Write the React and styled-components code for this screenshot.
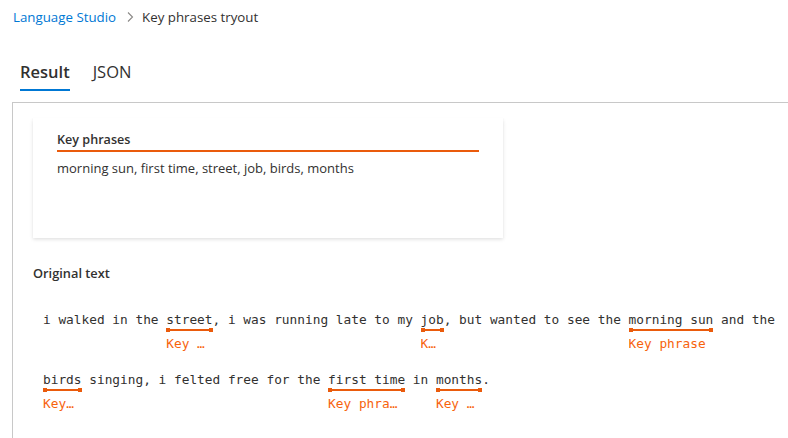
import React from "react";
import styled, { createGlobalStyle } from "styled-components";

const segments = [
  "i walked in the ",
  { phrase: "street" },
  ", i was running late to my ",
  { phrase: "job" },
  ", but wanted to see the ",
  { phrase: "morning sun" },
  " and the ",
  { phrase: "birds" },
  " singing, i felted free for the ",
  { phrase: "first time" },
  " in ",
  { phrase: "months" },
  ".",
];

const App = () => {
  return (
    <Page>
      <GlobalStyle />
      <Breadcrumb>
        <Crumb>Language Studio</Crumb>
        <Chevron viewBox="0 0 8 12">
          <path d="M2 1.5 L6.5 6 L2 10.5" />
        </Chevron>
        <Current>Key phrases tryout</Current>
      </Breadcrumb>
      <Tabs>
        <Tab active>Result</Tab>
        <Tab>JSON</Tab>
      </Tabs>
      <Panel>
        <Card>
          <CardTitle>Key phrases</CardTitle>
          <CardText>morning sun, first time, street, job, birds, months</CardText>
        </Card>
        <SectionTitle>Original text</SectionTitle>
        <Original>
          {segments.map((s, i) =>
            typeof s === "string" ? (
              <span key={i}>{s}</span>
            ) : (
              <Phrase key={i}>
                <Word>{s.phrase}</Word>
                <Bar />
                <Label>Key phrase</Label>
              </Phrase>
            )
          )}
        </Original>
      </Panel>
    </Page>
  );
};

const GlobalStyle = createGlobalStyle`
  body {
    margin: 0;
    background: #fff;
    overflow: hidden;
    font-family: "Open Sans", "Noto Sans", sans-serif;
    color: #323130;
  }
`;

const Page = styled.div`
  width: 788px;
  height: 438px;
  overflow: hidden;
`;

const Breadcrumb = styled.div`
  display: flex;
  align-items: center;
  padding: 8px 0 0 13px;
  height: 18px;
  font-size: 13.3px;
  line-height: 18px;
`;

const Crumb = styled.span`
  color: #0078d4;
`;

const Chevron = styled.svg`
  width: 8px;
  height: 12px;
  margin: 0 8px 0 10px;
  fill: none;
  stroke: #8a8886;
  stroke-width: 1.1;
`;

const Current = styled.span`
  color: #323130;
`;

const Tabs = styled.div`
  display: flex;
  gap: 23px;
  margin: 34px 0 11px 20px;
`;

const Tab = styled.div`
  font-size: 16.5px;
  line-height: 24px;
  font-weight: ${(p) => (p.active ? 600 : 400)};
  color: #323130;
  padding-bottom: 5px;
  border-bottom: 2px solid ${(p) => (p.active ? "#0078d4" : "transparent")};
`;

const Panel = styled.div`
  margin-left: 12px;
  border-top: 1px solid #c8c8c8;
  border-left: 1px solid #c8c8c8;
  padding: 15px 0 40px 20px;
`;

const Card = styled.div`
  width: 470px;
  height: 120px;
  box-sizing: border-box;
  padding: 13px 24px;
  background: #fff;
  box-shadow: 0 1.6px 3.6px rgba(0, 0, 0, 0.13), 0 0.3px 0.9px rgba(0, 0, 0, 0.11);
`;

const CardTitle = styled.div`
  font-size: 12.6px;
  font-weight: 600;
  line-height: 18px;
  padding-bottom: 1px;
  border-bottom: 2px solid #ea5b0c;
`;

const CardText = styled.div`
  font-size: 13px;
  line-height: 18px;
  margin-top: 7px;
`;

const SectionTitle = styled.div`
  font-size: 12.8px;
  font-weight: 600;
  line-height: 18px;
  margin-top: 26px;
`;

const Original = styled.div`
  margin-top: 29px;
  padding-left: 10px;
  font-family: "DejaVu Sans Mono", "Liberation Mono", monospace;
  font-size: 12.8px;
  line-height: 18px;
  color: #323130;
  white-space: pre-wrap;
`;

const Phrase = styled.span`
  display: inline-flex;
  flex-direction: column;
  vertical-align: top;
  margin-bottom: 18px;
`;

const Word = styled.span`
  line-height: 18px;
  white-space: pre;
`;

const Bar = styled.span`
  position: relative;
  height: 2px;
  margin: 0 0 1px;
  background: #ea5b0c;

  &::before,
  &::after {
    content: "";
    position: absolute;
    top: -1px;
    width: 4px;
    height: 4px;
    background: #ea5b0c;
  }
  &::before {
    left: 0;
  }
  &::after {
    right: 0;
  }
`;

const Label = styled.span`
  contain: inline-size;
  width: calc(100% - 2px);
  margin-top: 3px;
  line-height: 18px;
  color: #f7630c;
  white-space: nowrap;
  overflow: hidden;
  text-overflow: ellipsis;
`;

export default App;
